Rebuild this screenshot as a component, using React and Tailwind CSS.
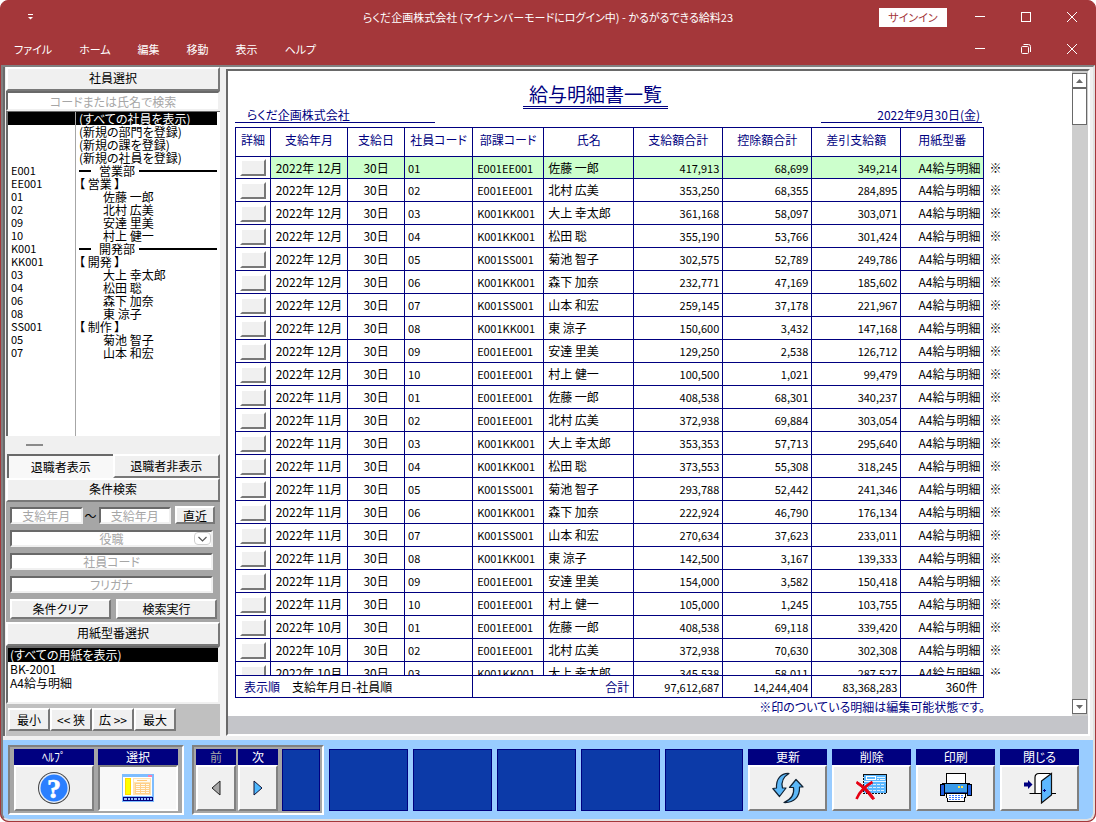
import React from "react";

const employees = {
  "01": ["佐藤 一郎", "E001EE001"],
  "02": ["北村 広美", "E001EE001"],
  "03": ["大上 幸太郎", "K001KK001"],
  "04": ["松田 聡", "K001KK001"],
  "05": ["菊池 智子", "K001SS001"],
  "06": ["森下 加奈", "K001KK001"],
  "07": ["山本 和宏", "K001SS001"],
  "08": ["東 涼子", "K001KK001"],
  "09": ["安達 里美", "E001EE001"],
  "10": ["村上 健一", "E001EE001"],
};

const payslips = [
  ["12", "01", "417,913", "68,699", "349,214"],
  ["12", "02", "353,250", "68,355", "284,895"],
  ["12", "03", "361,168", "58,097", "303,071"],
  ["12", "04", "355,190", "53,766", "301,424"],
  ["12", "05", "302,575", "52,789", "249,786"],
  ["12", "06", "232,771", "47,169", "185,602"],
  ["12", "07", "259,145", "37,178", "221,967"],
  ["12", "08", "150,600", "3,432", "147,168"],
  ["12", "09", "129,250", "2,538", "126,712"],
  ["12", "10", "100,500", "1,021", "99,479"],
  ["11", "01", "408,538", "68,301", "340,237"],
  ["11", "02", "372,938", "69,884", "303,054"],
  ["11", "03", "353,353", "57,713", "295,640"],
  ["11", "04", "373,553", "55,308", "318,245"],
  ["11", "05", "293,788", "52,442", "241,346"],
  ["11", "06", "222,924", "46,790", "176,134"],
  ["11", "07", "270,634", "37,623", "233,011"],
  ["11", "08", "142,500", "3,167", "139,333"],
  ["11", "09", "154,000", "3,582", "150,418"],
  ["11", "10", "105,000", "1,245", "103,755"],
  ["10", "01", "408,538", "69,118", "339,420"],
  ["10", "02", "372,938", "70,630", "302,308"],
  ["10", "03", "345,538", "58,011", "287,527"],
];

const tree = [
  ["", "(すべての社員を表示)", "all"],
  ["", "(新規の部門を登録)", "plain"],
  ["", "(新規の課を登録)", "plain"],
  ["", "(新規の社員を登録)", "plain"],
  ["E001", "営業部", "dept"],
  ["EE001", "【 営業 】", "plain"],
  ["01", "佐藤 一郎", "person"],
  ["02", "北村 広美", "person"],
  ["09", "安達 里美", "person"],
  ["10", "村上 健一", "person"],
  ["K001", "開発部", "dept"],
  ["KK001", "【 開発 】", "plain"],
  ["03", "大上 幸太郎", "person"],
  ["04", "松田 聡", "person"],
  ["06", "森下 加奈", "person"],
  ["08", "東 涼子", "person"],
  ["SS001", "【 制作 】", "plain"],
  ["05", "菊池 智子", "person"],
  ["07", "山本 和宏", "person"],
];

const raised =
  "border-2 border-t-white border-l-white border-r-[#787878] border-b-[#787878] bg-[#f0f0f0]";
const sunken =
  "border-2 border-t-[#696969] border-l-[#696969] border-r-[#f0f0f0] border-b-[#f0f0f0] bg-white";

function SectionHeader({ children }) {
  return (
    <h2 className={`${raised} h-6 shrink-0 text-center text-[12px] leading-[18px] text-black`}>
      {children}
    </h2>
  );
}

function Field({ label, className = "" }) {
  return (
    <input
      aria-label={label}
      placeholder={label}
      className={`${sunken} h-[17px] min-w-0 rounded-none p-0 text-center text-[12px] leading-[13px] outline-none placeholder:text-[#a6a6a6] ${className}`}
    />
  );
}

function PushButton({ children, className = "" }) {
  return (
    <button className={`${raised} text-center text-[12px] leading-[16px] text-black ${className}`}>
      {children}
    </button>
  );
}

function TreeRow({ code, text, kind }) {
  const selected = kind === "all";
  return (
    <li
      className={`flex h-[13px] text-[12px] leading-[13px] whitespace-nowrap ${selected ? "bg-black text-white" : "text-black"}`}
    >
      <span className="w-[68px] shrink-0 border-r border-[#a6a6a6] pl-[3px] text-[11px]">{code}</span>
      {kind === "dept" ? (
        <span className="flex flex-1 items-center gap-2 pl-[3px]">
          <span className="h-[2px] w-3 bg-black" />
          {text}
          <span className="-ml-1 h-[2px] flex-1 bg-black" />
        </span>
      ) : (
        <span className={kind === "person" ? "pl-[27px]" : "pl-[3px]"}>{text}</span>
      )}
    </li>
  );
}

function Sidebar() {
  return (
    <aside className="flex w-[214px] shrink-0 flex-col bg-[#f0f0f0]">
      <SectionHeader>社員選択</SectionHeader>
      <Field label="コードまたは氏名で検索" className="h-5! w-full shrink-0" />
      <div className="flex min-h-0 flex-1 flex-col overflow-hidden border-t border-l-2 border-t-[#696969] border-l-[#696969] bg-white">
        <ul className="shrink-0 pr-[3px]">
          {tree.map(([code, text, kind]) => (
            <TreeRow key={code + text} code={code} text={text} kind={kind} />
          ))}
        </ul>
        <div className="w-[68px] flex-1 border-r border-[#a6a6a6]" />
      </div>
      <div className="flex h-[18px] shrink-0 items-center pl-5">
        <div className="h-[2px] w-[17px] bg-[#8a8a8a]" />
      </div>
      <div className="flex h-6 shrink-0 pl-px">
        <button className="flex-1 border-t-2 border-l-2 border-[#696969] bg-[#f8f8f8] text-[12px] leading-[16px]">
          退職者表示
        </button>
        <PushButton className="flex-1">退職者非表示</PushButton>
      </div>
      <SectionHeader>条件検索</SectionHeader>
      <form className="flex shrink-0 flex-col gap-[6px] bg-[#a6a6a6] pt-1 pr-[7px] pb-[3px] pl-1">
        <div className="flex h-[18px] items-center text-[12px]">
          <Field label="支給年月" className="flex-1" />
          <span className="w-4 text-center leading-[17px]">～</span>
          <Field label="支給年月" className="flex-1" />
          <PushButton className="-mr-[2px] ml-1 h-[18px] w-10 leading-[13px]!">直近</PushButton>
        </div>
        <div className={`${sunken} grid h-[17px]`}>
          <select
            aria-label="役職"
            className="col-start-1 row-start-1 h-[13px] w-full appearance-none p-0 text-center text-[12px] leading-[13px] text-[#a6a6a6] outline-none"
          >
            <option>役職</option>
          </select>
          <span className="pointer-events-none col-start-1 row-start-1 flex h-[13px] w-[17px] items-center justify-center justify-self-end rounded-sm border border-[#cfcfcf] bg-white">
            <svg width="9" height="6" viewBox="0 0 9 6" fill="none" stroke="#555" strokeWidth="1.2">
              <path d="M0.5 1 L4.5 5 L8.5 1" />
            </svg>
          </span>
        </div>
        <Field label="社員コード" />
        <Field label="フリガナ" />
        <div className="-mr-1 flex gap-[5px]">
          <PushButton className="h-5 flex-1">条件クリア</PushButton>
          <PushButton className="h-5 flex-1">検索実行</PushButton>
        </div>
      </form>
      <SectionHeader>用紙型番選択</SectionHeader>
      <ul className={`${sunken} h-[58px] shrink-0 text-[12px] leading-[14px] text-black`}>
        <li className="bg-black pl-[2px] text-white">(すべての用紙を表示)</li>
        <li className="pl-[2px]">BK-2001</li>
        <li className="pl-[2px]">A4給与明細</li>
      </ul>
      <div className="flex shrink-0 bg-[#c0c0c0] pt-1 pb-[5px] pl-[2px]">
        <PushButton className="h-[23px] w-[42px]">最小</PushButton>
        <PushButton className="h-[23px] w-[42px]">&lt;&lt; 狭</PushButton>
        <PushButton className="h-[23px] w-[42px]">広 &gt;&gt;</PushButton>
        <PushButton className="h-[23px] w-[42px]">最大</PushButton>
      </div>
    </aside>
  );
}

function Columns() {
  return (
    <colgroup>
      <col className="w-[35px]" />
      <col className="w-[77px]" />
      <col className="w-[57px]" />
      <col className="w-[68px]" />
      <col className="w-[71px]" />
      <col className="w-[90px]" />
      <col className="w-[89px]" />
      <col className="w-[89px]" />
      <col className="w-[89px]" />
      <col className="w-[83px]" />
      <col className="w-[20px]" />
    </colgroup>
  );
}

const headings = [
  "詳細", "支給年月", "支給日", "社員コード", "部課コード", "氏名",
  "支給額合計", "控除額合計", "差引支給額", "用紙型番",
];

const tableClass =
  "w-full table-fixed border-collapse whitespace-nowrap text-[12px] leading-[14px] text-black";
const cell = "border border-[#000080] py-0";
const amount = "px-[3px] text-right text-[11px]";

function Report() {
  return (
    <div className="flex min-w-0 flex-1 flex-col overflow-hidden pt-[10px] pr-[68px] pl-[7px] text-[#000080]">
      <div className="flex justify-center pr-12">
        <h1 className="h-[28px] border-b-3 border-double border-[#000080] px-[6px] text-[19px] leading-[26px]">
          給与明細書一覧
        </h1>
      </div>
      <div className="mb-1 flex justify-between pr-[22px] text-[12px] leading-[11px]">
        <p className="w-[200px] border-b border-[#000080] pb-[2px] pl-3">らくだ企画株式会社</p>
        <p className="w-[161px] border-b border-[#000080] pr-[2px] pb-[2px] text-right">2022年9月30日(金)</p>
      </div>
      <div className="min-h-0 flex-1 overflow-hidden">
        <table className={tableClass}>
          <Columns />
          <thead className="text-[#000080]">
            <tr className="h-[29px]">
              {headings.map((h) => (
                <th key={h} className={`${cell} pb-1 text-center font-normal`}>{h}</th>
              ))}
              <th aria-label="編集可能" />
            </tr>
          </thead>
          <tbody>
            {payslips.map(([month, code, gross, deduct, net], i) => {
              const tint = i === 0 ? "bg-[#ccffcc]" : "bg-white";
              return (
                <tr key={month + code} className={i === 0 ? "h-[22px]" : "h-[23px]"}>
                  <td className={`${cell} px-1`}>
                    <button aria-label="詳細" className={`${raised} block h-[17px] w-[26px]`} />
                  </td>
                  <td className={`${cell} ${tint} text-center`}>2022年 {month}月</td>
                  <td className={`${cell} ${tint} text-center`}>30日</td>
                  <td className={`${cell} ${tint} px-[3px] text-[11px]`}>{code}</td>
                  <td className={`${cell} ${tint} px-1 text-[11px]`}>{employees[code][1]}</td>
                  <td className={`${cell} ${tint} px-1`}>{employees[code][0]}</td>
                  <td className={`${cell} ${tint} ${amount}`}>{gross}</td>
                  <td className={`${cell} ${tint} ${amount}`}>{deduct}</td>
                  <td className={`${cell} ${tint} ${amount}`}>{net}</td>
                  <td className={`${cell} ${tint} px-[3px] text-right`}>A4給与明細</td>
                  <td className="p-0 pl-[5px]">※</td>
                </tr>
              );
            })}
          </tbody>
        </table>
      </div>
      <table className={tableClass}>
        <Columns />
        <tbody>
          <tr className="h-[22px]">
            <td colSpan={4} className={`${cell} pl-2`}>
              <span className="mr-3 text-[#000080]">表示順</span>
              支給年月日-社員順
            </td>
            <td colSpan={2} className={`${cell} px-1 text-right text-[#000080]`}>合計</td>
            <td className={`${cell} ${amount}`}>97,612,687</td>
            <td className={`${cell} ${amount}`}>14,244,404</td>
            <td className={`${cell} ${amount}`}>83,368,283</td>
            <td className={`${cell} pr-[6px] text-right`}>360件</td>
            <td />
          </tr>
        </tbody>
      </table>
      <p className="h-[18px] pr-[19px] text-right text-[12px] leading-[17px]">
        ※印のついている明細は編集可能状態です。
      </p>
    </div>
  );
}

function ScrollBar() {
  return (
    <div className="flex w-4 shrink-0 flex-col bg-[#cdcdcd] pt-[2px]">
      <button aria-label="上へ" className="flex h-[15px] w-[15px] items-center justify-center border border-[#696969] bg-white">
        <svg width="7" height="4"><path d="M0 4L3.5 0L7 4z" fill="#696969" /></svg>
      </button>
      <div className="h-[37px] w-[15px] border border-[#696969] bg-white" />
      <div className="flex-1" />
      <button aria-label="下へ" className="mb-[2px] flex h-[15px] w-[15px] items-center justify-center border border-[#696969] bg-white">
        <svg width="7" height="4"><path d="M0 0L3.5 4L7 0z" fill="#696969" /></svg>
      </button>
    </div>
  );
}

function HelpIcon() {
  return (
    <svg width="34" height="34" viewBox="0 0 34 34">
      <circle cx="17" cy="17" r="16" fill="#444" />
      <circle cx="17" cy="17" r="15" fill="#e8eef8" />
      <circle cx="17" cy="17" r="13.500" fill="#2a7fff" />
      <text x="17" y="26.500" textAnchor="middle" fill="#fff" stroke="#fff" strokeWidth="0.6" fontSize="28" fontWeight="700" fontFamily="Liberation Serif">?</text>
    </svg>
  );
}

function SelectIcon() {
  return (
    <svg width="32" height="28" viewBox="0 0 32 28" shapeRendering="crispEdges">
      <rect x="0" y="0" width="32" height="28" rx="1" fill="#7dbdff" />
      <rect x="26" y="1" width="4" height="2" fill="#ff7faf" />
      <rect x="1" y="3" width="29" height="19" fill="#fff" />
      <rect x="3.500" y="4.500" width="5" height="16" fill="#ffff00" stroke="#ffd800" strokeWidth="1" />
      <rect x="11" y="4" width="18" height="17" fill="#ffe2b0" />
      <rect x="12" y="5" width="16" height="3" fill="#fffaf0" />
      <rect x="15" y="6" width="10" height="1" fill="#ffc878" />
      <rect x="13" y="9" width="15" height="11" fill="#ffd08a" />
      <path d="M14 10.500h4M19 10.500h4M24 10.500h3M14 12.500h4M19 12.500h4M24 12.500h3M14 14.500h4M19 14.500h4M24 14.500h3M14 16.500h4M19 16.500h4M24 16.500h3M14 18.500h4M19 18.500h4M24 18.500h3" stroke="#fffaf0" />
      <rect x="1" y="23" width="30" height="4" fill="#000080" />
      <path d="M2 25h3M6 25h2M9 25h2M12 25h3M16 25h2M19 25h2M22 25h2M25 25h2M28 25h2" stroke="#9fc8ff" strokeWidth="2" />
    </svg>
  );
}

function TriangleIcon({ left }) {
  return (
    <svg width="10" height="16" viewBox="0 0 10 16">
      {left ? (
        <path d="M9 1V15L1 8z" fill="#a6a6a6" stroke="#222" />
      ) : (
        <path d="M1 1V15L9 8z" fill="#4db8ff" stroke="#113" />
      )}
    </svg>
  );
}

function RefreshIcon() {
  return (
    <svg width="32" height="32" viewBox="0 0 32 32" fill="#5cb8f8" stroke="#123" strokeWidth="1.200" strokeLinejoin="round">
      <path d="M17 1.500C9 1 4 7 4.500 16L0.800 16.500L7.500 24.500L14 16L10.500 16C9 10 11 5 17 1.500z" />
      <path d="M12 30.500C22 31 28 25 27.500 15H31L24 7.500L17.500 15.500H21.500C22.500 22 19 27.500 12 30.500z" />
    </svg>
  );
}

function DeleteIcon() {
  return (
    <svg width="34" height="30" viewBox="0 0 34 30">
      <g shapeRendering="crispEdges">
        <rect x="9" y="2" width="22" height="18" fill="#5cb8ff" />
        <path d="M8 1.500H31.500V20" fill="none" stroke="#111" />
        <path d="M8.500 2V20.500H31" fill="none" stroke="#111" strokeDasharray="2 1" />
        <rect x="11.500" y="3.500" width="9" height="3" fill="#5cb8ff" stroke="#fff" />
        <path d="M22 6.500h2M25 6.500h5M22 4.500h8M9 8.500h22" stroke="#e4f3ff" />
        <path d="M10 11.500h20M10 14.500h20M10 17.500h20" stroke="#d8eeff" strokeDasharray="3 1" />
      </g>
      <path d="M2 8.500C8 12 15 18 19.500 25.500L17.500 26.500C13 20.500 7 14 1.500 10.500z" fill="#e60012" stroke="#e60012" strokeWidth="1" />
      <path d="M17.500 9C10 13 4.500 19 1.500 26" fill="none" stroke="#e60012" strokeWidth="2.600" />
    </svg>
  );
}

function PrintIcon() {
  return (
    <svg width="32" height="30" viewBox="0 0 32 30" shapeRendering="crispEdges" stroke="#000">
      <rect x="6.500" y="0.500" width="19" height="12" fill="#fff" />
      <path d="M3 10.500H29L30.500 12V20.500H1.500V12z" fill="#3b9be8" />
      <rect x="0.500" y="11.500" width="4" height="11" fill="#1f5ee0" />
      <rect x="27.500" y="11.500" width="4" height="11" fill="#1f5ee0" />
      <path d="M5 19.500H27" stroke="#1040a0" />
      <path d="M18 14h6" stroke="#ffe24a" strokeWidth="2" strokeDasharray="2 1" />
      <path d="M6.500 20.500H25.500L24.500 28.500H7.500z" fill="#fff" />
      <path d="M9 22.500h15M9 24.500h15M9 26.500h12" stroke="#3a7bff" strokeDasharray="2 1" />
    </svg>
  );
}

function DoorIcon() {
  return (
    <svg width="34" height="32" viewBox="0 0 34 32">
      <path d="M12.500 22V6Q12.500 2 16 2H27L18 9V22z" fill="#fff" />
      <path d="M6.500 21.500H12V5.500Q12 1.500 16 1.500H27.500M12 21.500H18M28 21.500H33" fill="none" stroke="#000" strokeWidth="1.200" />
      <path d="M18.500 9L28.500 1.500V23L18.500 31z" fill="#5cb8ff" stroke="#111" strokeWidth="1.200" />
      <path d="M20 18.500h3M21.500 17v3" stroke="#000080" />
      <path d="M1 10.500h4V8l4.500 4.500l-4.500 4.500v-2.500H1z" fill="#000080" />
    </svg>
  );
}

function ToolButton({ label, children, pressed, disabled, className = "flex-1" }) {
  return (
    <button disabled={disabled} className={`flex h-[62px] min-w-0 flex-col text-center ${className}`}>
      <span className={`block h-4 w-full bg-[#000080] text-[12px] leading-[15px] ${disabled ? "text-[#a6a6a6]" : "text-white"}`}>
        {label}
      </span>
      <span
        className={`flex w-full flex-1 items-center justify-center border-2 ${
          pressed
            ? "border-t-[#808080] border-l-[#808080] border-r-white border-b-white bg-[#f8f8f8]"
            : "border-t-white border-l-white border-r-[#808080] border-b-[#808080] bg-[#f0f0f0]"
        }`}
      >
        {children}
      </span>
    </button>
  );
}

function EmptySlot({ className = "" }) {
  return <div className={`h-[62px] border border-[#000080] bg-[#0c3aa8] ${className}`} />;
}

const group =
  "flex h-[70px] border-2 border-t-[#808080] border-l-[#808080] border-r-white border-b-white bg-[#a6a6a6] pt-[2px]";

function Toolbar() {
  return (
    <footer className="flex h-[79px] shrink-0 items-start bg-[#99ccff] pt-[5px] pr-[14px] pl-[5px]">
      <div className={`${group} w-[176px] gap-1 px-1`}>
        <ToolButton label="ﾍﾙﾌﾟ"><HelpIcon /></ToolButton>
        <ToolButton label="選択" pressed><SelectIcon /></ToolButton>
      </div>
      <div className={`${group} ml-2 w-[132px] gap-[2px] px-[2px]`}>
        <ToolButton label="前" disabled><TriangleIcon left /></ToolButton>
        <ToolButton label="次"><TriangleIcon /></ToolButton>
        <EmptySlot className="ml-[2px] w-[38px]" />
      </div>
      <div className="ml-[5px] grid min-w-0 flex-1 grid-cols-9 gap-[5px] pt-1">
        <EmptySlot />
        <EmptySlot />
        <EmptySlot />
        <EmptySlot />
        <EmptySlot />
        <ToolButton label="更新"><RefreshIcon /></ToolButton>
        <ToolButton label="削除"><DeleteIcon /></ToolButton>
        <ToolButton label="印刷"><PrintIcon /></ToolButton>
        <ToolButton label="閉じる"><DoorIcon /></ToolButton>
      </div>
    </footer>
  );
}

function WindowButton({ label, kind }) {
  return (
    <button aria-label={label} className="flex h-8 w-[46px] items-center justify-center">
      <svg width="12" height="12" viewBox="0 0 12 12" fill="none" stroke="#fff" strokeWidth="1">
        {kind === "min" && <path d="M1 5.500H11" />}
        {kind === "max" && <rect x="1.500" y="1.500" width="9" height="9" />}
        {kind === "restore" && (
          <>
            <rect x="1.500" y="3.500" width="7" height="7" rx="1" />
            <path d="M3.500 1.500H8.500Q10.500 1.500 10.500 3.500V9" />
          </>
        )}
        {kind === "close" && <path d="M1 1L11 11M11 1L1 11" />}
      </svg>
    </button>
  );
}

function TitleBar() {
  return (
    <header className="shrink-0 text-[11px] text-white">
      <div className="grid h-8 grid-cols-[1fr_auto_1fr] items-center">
        <div className="pl-[26px]">
          <button aria-label="クイック アクセス" className="flex">
            <svg width="8" height="8" viewBox="0 0 8 8" fill="#fff">
              <rect x="1" y="1" width="5" height="1" />
              <path d="M1 4H6L3.500 6.500z" />
            </svg>
          </button>
        </div>
        <h1>らくだ企画株式会社 (マイナンバーモードにログイン中) - かるがるできる給料23</h1>
        <div className="flex items-center justify-end">
          <button className="mr-[10px] h-[19px] w-[68px] bg-white leading-[17px] text-[#a4373a]">サインイン</button>
          <WindowButton label="最小化" kind="min" />
          <WindowButton label="最大化" kind="max" />
          <WindowButton label="閉じる" kind="close" />
        </div>
      </div>
      <div className="flex h-8 items-center justify-between">
        <nav className="flex gap-[27px] pl-[13px]">
          {["ファイル", "ホーム", "編集", "移動", "表示", "ヘルプ"].map((m) => (
            <button key={m}>{m}</button>
          ))}
        </nav>
        <div className="flex">
          <WindowButton label="ウィンドウを最小化" kind="min" />
          <WindowButton label="元に戻す" kind="restore" />
          <WindowButton label="ウィンドウを閉じる" kind="close" />
        </div>
      </div>
    </header>
  );
}

export default function App() {
  return (
    <div className="h-screen bg-white font-['Noto_Sans_CJK_JP',sans-serif] [font-feature-settings:'palt']">
      <div className="flex h-full flex-col overflow-hidden rounded-lg border border-[#a4373a] bg-[#a4373a]">
        <TitleBar />
        <div className="flex min-h-0 flex-1 flex-col overflow-hidden rounded-b-lg border-2 border-t-[#808080] border-l-[#808080] border-r-[#e0e0e0] border-b-[#e0e0e0] bg-[#f0f0f0]">
          <div className="flex min-h-0 flex-1 pb-1">
            <div className="flex border-l-2 border-[#696969] pl-px">
              <Sidebar />
            </div>
            <main className="mt-[2px] mr-[3px] ml-[6px] flex min-w-0 flex-1 flex-col border-2 border-t-[#696969] border-l-[#696969] border-r-white border-b-white bg-white">
              <div className="flex min-h-0 flex-1">
                <Report />
                <ScrollBar />
              </div>
              <div className="h-[18px] shrink-0 bg-[#c4c5c9]" />
            </main>
          </div>
          <Toolbar />
        </div>
      </div>
    </div>
  );
}
